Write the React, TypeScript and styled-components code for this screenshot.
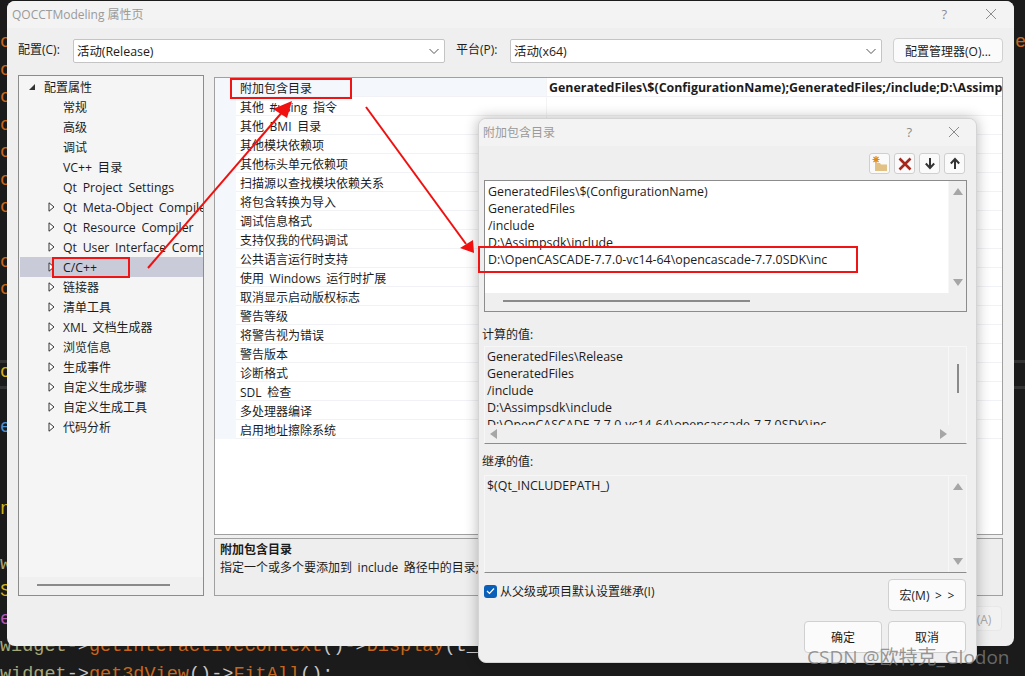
import styled, { createGlobalStyle } from 'styled-components'

const GlobalStyle = createGlobalStyle`
  html, body {
    margin: 0;
    padding: 0;
    background: #1b1b1b;
  }
  * {
    box-sizing: border-box;
  }
`

const uiFont = `'Open Sans', 'Noto Sans CJK SC', sans-serif`

const treeItems = [
  { label: '常规' },
  { label: '高级' },
  { label: '调试' },
  { label: 'VC++ 目录', latin: true },
  { label: 'Qt Project Settings', latin: true },
  { label: 'Qt Meta-Object Compiler', arrow: true, latin: true },
  { label: 'Qt Resource Compiler', arrow: true, latin: true },
  { label: 'Qt User Interface Compiler', arrow: true, latin: true },
  { label: 'C/C++', arrow: true, selected: true, latin: true },
  { label: '链接器', arrow: true },
  { label: '清单工具', arrow: true },
  { label: 'XML 文档生成器', arrow: true },
  { label: '浏览信息', arrow: true },
  { label: '生成事件', arrow: true },
  { label: '自定义生成步骤', arrow: true },
  { label: '自定义生成工具', arrow: true },
  { label: '代码分析', arrow: true },
]

const propertyNames = [
  '其他 #using 指令',
  '其他 BMI 目录',
  '其他模块依赖项',
  '其他标头单元依赖项',
  '扫描源以查找模块依赖关系',
  '将包含转换为导入',
  '调试信息格式',
  '支持仅我的代码调试',
  '公共语言运行时支持',
  '使用 Windows 运行时扩展',
  '取消显示启动版权标志',
  '警告等级',
  '将警告视为错误',
  '警告版本',
  '诊断格式',
  'SDL 检查',
  '多处理器编译',
  '启用地址擦除系统',
]

const editLines = [
  'GeneratedFiles\\$(ConfigurationName)',
  'GeneratedFiles',
  '/include',
  'D:\\Assimpsdk\\include',
  'D:\\OpenCASCADE-7.7.0-vc14-64\\opencascade-7.7.0SDK\\inc',
]

const computedLines = [
  'GeneratedFiles\\Release',
  'GeneratedFiles',
  '/include',
  'D:\\Assimpsdk\\include',
  'D:\\OpenCASCADE-7.7.0-vc14-64\\opencascade-7.7.0SDK\\inc',
]

const marginGlyphs: Record<number, [string, string]> = {
  1: ['c', '#c8671c'],
  2: ['c', '#c8671c'],
  3: ['c', '#c8671c'],
  4: ['c', '#c8671c'],
  5: ['c', '#c8671c'],
  6: ['c', '#c8671c'],
  7: ['c', '#c8671c'],
  9: ['c', '#c8671c'],
  10: ['c', '#c8671c'],
  13: ['o', '#d6b11f'],
  15: ['e', '#4f8fd0'],
  18: ['n', '#d6b11f'],
  20: ['w', '#a8a878'],
  21: ['S', '#d6b11f'],
  22: ['e', '#b455b4'],
}

function Chevron() {
  return (
    <svg width="12" height="12" viewBox="0 0 12 12">
      <path d="M1.5 4 L6 8.5 L10.5 4" fill="none" stroke="#555" strokeWidth="1" />
    </svg>
  )
}

function CloseGlyph() {
  return (
    <svg width="12" height="12" viewBox="0 0 12 12">
      <path d="M1 1 L11 11 M11 1 L1 11" stroke="#8c8c8c" strokeWidth="1" />
    </svg>
  )
}

function TreeArrow({ open }: { open?: boolean }) {
  return open ? (
    <svg width="8" height="8" viewBox="0 0 8 8">
      <path d="M7 1 V7 H1 Z" fill="#333" />
    </svg>
  ) : (
    <svg width="7" height="10" viewBox="0 0 7 10">
      <path d="M1 .8 L6 5 L1 9.2 Z" fill="#fff" stroke="#333" strokeWidth="1" />
    </svg>
  )
}

function NewFolderIcon() {
  return (
    <svg width="18" height="17" viewBox="0 0 18 17">
      <path d="M4 8 H9 L10 9.5 H16 V16 H4 Z" fill="#e2c184" />
      <path d="M5 1 V8 M1.5 4.5 H8.5 M2.5 2 L7.5 7 M7.5 2 L2.5 7" stroke="#e08a1a" strokeWidth="1.2" />
    </svg>
  )
}

function DeleteIcon() {
  return (
    <svg width="14" height="14" viewBox="0 0 14 14">
      <path d="M1.5 1.5 L12.5 12.5 M12.5 1.5 L1.5 12.5" stroke="#a5281c" strokeWidth="2.6" />
    </svg>
  )
}

function ArrowIcon({ up }: { up?: boolean }) {
  return (
    <svg width="12" height="13" viewBox="0 0 12 13">
      <path
        d={up ? 'M6 12 V2.5 M1.8 6.5 L6 2 L10.2 6.5' : 'M6 1 V10.5 M1.8 6.5 L6 11 L10.2 6.5'}
        fill="none"
        stroke="#333"
        strokeWidth="2"
      />
    </svg>
  )
}

export default function App() {
  return (
    <Page>
      <GlobalStyle />

      <CodeLayer>
        {Array.from({ length: 23 }, (_, i) => (
          <CodeLine key={i} $color={marginGlyphs[i]?.[1]}>
            {marginGlyphs[i]?.[0] ?? ' '}
          </CodeLine>
        ))}
        <CodeLine>
          <Olive>widget</Olive>
          <Plain>-&gt;</Plain>
          <Method>getInteractiveContext</Method>
          <Plain>()-&gt;</Plain>
          <Method>Display</Method>
          <Plain>(t_</Plain>
        </CodeLine>
        <CodeLine>
          <Olive>widget</Olive>
          <Plain>-&gt;</Plain>
          <Method>get3dView</Method>
          <Plain>()-&gt;</Plain>
          <Method>FitAll</Method>
          <Plain>();</Plain>
        </CodeLine>
        <RightGlyph>e</RightGlyph>
        <EditorRule $top={358} />
        <EditorRule $top={384} />
      </CodeLayer>

      <Window>
        <TitleBar>
          <TitleText>QOCCTModeling 属性页</TitleText>
          <TitleButtons $gap={38}>
            <HelpMark>?</HelpMark>
            <CloseGlyph />
          </TitleButtons>
        </TitleBar>

        <ConfigRow>
          <ConfigLabel $width={55}>配置(C):</ConfigLabel>
          <Select>
            <SelectText>活动(Release)</SelectText>
            <Chevron />
          </Select>
          <ConfigLabel $width={54} $gap={11}>平台(P):</ConfigLabel>
          <Select>
            <SelectText>活动(x64)</SelectText>
            <Chevron />
          </Select>
          <ManagerButton>配置管理器(O)...</ManagerButton>
        </ConfigRow>

        <Panels>
          <Tree>
            <TreeRows>
              <TreeRow $level={1}>
                <ArrowSlot><TreeArrow open /></ArrowSlot>
                配置属性
              </TreeRow>
              {treeItems.map(item => (
                <TreeRow key={item.label} $level={2} $selected={item.selected} $latin={item.latin}>
                  <ArrowSlot>{item.arrow && <TreeArrow />}</ArrowSlot>
                  {item.label}
                </TreeRow>
              ))}
            </TreeRows>
            <TreeScroll>
              <HThumb $left={18} $width={133} />
            </TreeScroll>
          </Tree>

          <RightColumn>
            <PropertyGrid>
              <PropertyRow>
                <Gutter />
                <NameCell $active>附加包含目录</NameCell>
                <ValueCell>
                  GeneratedFiles\$(ConfigurationName);GeneratedFiles;/include;D:\Assimpsdk\include;D:\OpenCASCADE
                </ValueCell>
              </PropertyRow>
              {propertyNames.map(name => (
                <PropertyRow key={name}>
                  <Gutter />
                  <NameCell>{name}</NameCell>
                  <ValueCell />
                </PropertyRow>
              ))}
            </PropertyGrid>
            <Description>
              <DescriptionTitle>附加包含目录</DescriptionTitle>
              <DescriptionText>指定一个或多个要添加到 include 路径中的目录;如果有多个目录,请用分号分隔。(/I[路径])</DescriptionText>
            </Description>
          </RightColumn>
        </Panels>

        <Footer>
          <ApplyButton>应用(A)</ApplyButton>
        </Footer>
      </Window>

      <Dialog>
        <TitleBar>
          <TitleText $dialog>附加包含目录</TitleText>
          <TitleButtons $gap={36} $dialog>
            <HelpMark>?</HelpMark>
            <CloseGlyph />
          </TitleButtons>
        </TitleBar>

        <Toolbar>
          <ToolButton><NewFolderIcon /></ToolButton>
          <ToolButton><DeleteIcon /></ToolButton>
          <ToolButton><ArrowIcon /></ToolButton>
          <ToolButton><ArrowIcon up /></ToolButton>
        </Toolbar>

        <ListBox $height={132} $dark>
          <ListMain>
            <ListText $white>
              {editLines.map(line => <ListLine key={line}>{line}</ListLine>)}
            </ListText>
            <VScroll>
              <ScrollArrow $dir="up" />
              <ScrollArrow $dir="down" />
            </VScroll>
          </ListMain>
          <HScrollBar>
            <HThumb $left={18} $width={247} />
          </HScrollBar>
        </ListBox>

        <SectionLabel $top={14} $bottom={3}>计算的值:</SectionLabel>
        <ListBox $height={98}>
          <ListMain>
            <ListText>
              {computedLines.map(line => <ListLine key={line}>{line}</ListLine>)}
            </ListText>
            <VScroll>
              <VThumb />
            </VScroll>
          </ListMain>
          <HScrollBar $arrows>
            <ScrollArrow $dir="left" />
            <ScrollArrow $dir="right" />
          </HScrollBar>
        </ListBox>

        <SectionLabel $top={9} $bottom={5}>继承的值:</SectionLabel>
        <ListBox $height={98}>
          <ListMain>
            <ListText>
              <ListLine>$(Qt_INCLUDEPATH_)</ListLine>
            </ListText>
            <VScroll>
              <ScrollArrow $dir="up" />
              <ScrollArrow $dir="down" />
            </VScroll>
          </ListMain>
        </ListBox>

        <InheritRow>
          <InheritLabel>
            <CheckBox>
              <svg width="9" height="8" viewBox="0 0 9 8">
                <path d="M1 4 L3.5 6.5 L8 1.5" fill="none" stroke="#fff" strokeWidth="1.2" />
              </svg>
            </CheckBox>
            从父级或项目默认设置继承(I)
          </InheritLabel>
          <DialogButton>宏(M) &gt; &gt;</DialogButton>
        </InheritRow>

        <ButtonRow>
          <DialogButton>确定</DialogButton>
          <DialogButton>取消</DialogButton>
        </ButtonRow>
      </Dialog>

      <RedBox $x={230} $y={78} $w={122} $h={21} />
      <RedBox $x={52} $y={257} $w={78} $h={21} />
      <RedBox $x={478} $y={246} $w={380} $h={27} />

      <Annotations width="1025" height="676" viewBox="0 0 1025 676">
        <path d="M148 268 L284 110" stroke="#f01010" strokeWidth="2" />
        <path d="M292 101 L273 109 L287 118 Z" fill="#f01010" />
        <path d="M366 107 L466 244" stroke="#f01010" strokeWidth="2" />
        <path d="M474 253 L473 240 L460 248 Z" fill="#f01010" />
      </Annotations>

      <Watermark>CSDN @欧特克_Glodon</Watermark>
    </Page>
  )
}

// #region CSS

const Page = styled.div`
  position: relative;
  width: 1025px;
  height: 676px;
  overflow: hidden;
  background: #1b1b1b;
  font-family: ${uiFont};
  font-size: 12px;
  word-spacing: 2.5px;
  color: #1c1c1c;
`

const CodeLayer = styled.div`
  position: absolute;
  inset: 2px 0 0 0;
  font-family: 'Liberation Mono', monospace;
  font-size: 18.53px;
  word-spacing: 0;
`

const CodeLine = styled.div<{ $color?: string }>`
  height: 27.45px;
  line-height: 27.45px;
  white-space: pre;
  color: ${props => props.$color || '#ccc'};
`

const Olive = styled.span`
  color: #a8a878;
`

const Plain = styled.span`
  color: #c8c8c8;
`

const Method = styled.span`
  color: #c8671c;
`

const RightGlyph = styled.div`
  position: absolute;
  top: 27px;
  left: 1015px;
  line-height: 27.45px;
  color: #c8671c;
`

const EditorRule = styled.div<{ $top: number }>`
  position: absolute;
  top: ${props => props.$top}px;
  left: 0;
  right: 0;
  height: 3px;
  background: #333;
`

const Window = styled.div`
  position: absolute;
  left: 7px;
  top: 1px;
  width: 1007px;
  height: 645px;
  display: flex;
  flex-direction: column;
  background: #efefef;
  border-radius: 8px;
  overflow: hidden;
`

const TitleBar = styled.div`
  flex: none;
  height: 27px;
  padding-bottom: 2px;
  display: flex;
  align-items: center;
  justify-content: space-between;
  background: #f3f3f3;
`

const TitleText = styled.div<{ $dialog?: boolean }>`
  padding-left: ${props => (props.$dialog ? 4 : 5)}px;
  color: #9a9a9a;
  font-size: 12px;
  word-spacing: 0;
`

const TitleButtons = styled.div<{ $gap: number; $dialog?: boolean }>`
  display: flex;
  align-items: center;
  gap: ${props => props.$gap}px;
  padding-right: ${props => (props.$dialog ? 16 : 17)}px;
`

const HelpMark = styled.span`
  color: #8c8c8c;
  font-size: 13px;
`

const ConfigRow = styled.div`
  flex: none;
  height: 25px;
  margin: 11px 0 11px;
  padding: 0 12px 0 11px;
  display: flex;
  align-items: flex-start;
`

const ConfigLabel = styled.div<{ $width: number; $gap?: number }>`
  flex: none;
  width: ${props => props.$width}px;
  margin-left: ${props => props.$gap || 0}px;
  line-height: 22px;
`

const Select = styled.div`
  flex: none;
  width: 372px;
  height: 24px;
  padding: 0 4px 0 3px;
  display: flex;
  align-items: center;
  justify-content: space-between;
  background: #fff;
  border: 1px solid #c4c4c4;
  border-radius: 2px;
`

const SelectText = styled.span`
  font-size: 12.4px;
`

const ManagerButton = styled.div`
  flex: none;
  width: 110px;
  height: 25px;
  margin: -1px 0 0 11px;
  display: flex;
  align-items: center;
  justify-content: center;
  background: #fbfbfb;
  border: 1px solid #d0d0d0;
  border-radius: 4px;
`

const Panels = styled.div`
  flex: none;
  height: 521px;
  padding: 0 11px;
  display: flex;
  gap: 10px;
`

const Tree = styled.div`
  flex: none;
  width: 186px;
  display: flex;
  flex-direction: column;
  background: #f5f5f5;
  border: 1px solid #8c8c8c;
  overflow: hidden;
`

const TreeRows = styled.div`
  flex: 1;
  padding: 1px 0 0 1px;
`

const TreeRow = styled.div<{ $level: number; $selected?: boolean; $latin?: boolean }>`
  height: 20px;
  padding-left: ${props => (props.$level === 1 ? 6 : 25)}px;
  display: flex;
  align-items: center;
  white-space: nowrap;
  overflow: hidden;
  font-size: ${props => (props.$latin ? 12.3 : 12)}px;
  background: ${props => (props.$selected ? '#c9cbd9' : 'transparent')};
`

const ArrowSlot = styled.span`
  flex: none;
  width: 12px;
  margin-right: 6px;
  display: flex;
  align-items: center;
  justify-content: center;
`

const TreeScroll = styled.div`
  flex: none;
  height: 18px;
  position: relative;
  background: #f0f0f0;
`

const HThumb = styled.div<{ $left: number; $width: number }>`
  margin-left: ${props => props.$left}px;
  margin-top: 7px;
  width: ${props => props.$width}px;
  height: 2px;
  background: #8a8a8a;
`

const RightColumn = styled.div`
  flex: 1;
  min-width: 0;
  padding-top: 2px;
  display: flex;
  flex-direction: column;
  gap: 3px;
`

const PropertyGrid = styled.div`
  flex: none;
  height: 458px;
  background: #fff;
  border: 1px solid #a0a0a0;
  overflow: hidden;
`

const PropertyRow = styled.div`
  height: 19px;
  display: flex;
`

const Gutter = styled.div`
  flex: none;
  width: 21px;
  background: #f4f7fc;
`

const NameCell = styled.div<{ $active?: boolean }>`
  flex: none;
  width: 310px;
  padding: 2px 0 0 4px;
  line-height: 17px;
  white-space: nowrap;
  background: ${props => (props.$active ? '#f4f7fc' : '#fff')};
  border-bottom: 1px solid #f0f2f5;
`

const ValueCell = styled.div`
  flex: 1;
  min-width: 0;
  padding: 1px 0 0 2px;
  line-height: 18px;
  font-size: 12.4px;
  font-weight: 700;
  white-space: nowrap;
  overflow: hidden;
  border-left: 1px solid #f4f4f4;
  border-bottom: 1px solid #f0f2f5;
`

const Description = styled.div`
  flex: none;
  height: 58px;
  padding: 2px 5px;
  background: #eeeeee;
  border: 1px solid #a0a0a0;
  overflow: hidden;
`

const DescriptionTitle = styled.div`
  line-height: 18px;
  font-weight: 700;
`

const DescriptionText = styled.div`
  line-height: 18px;
  white-space: nowrap;
`

const Footer = styled.div`
  flex: none;
  padding: 10px 12px 0 0;
  display: flex;
  justify-content: flex-end;
`

const ApplyButton = styled.div`
  width: 60px;
  height: 25px;
  display: flex;
  align-items: center;
  justify-content: center;
  color: #a8a8a8;
  background: #f2f2f2;
  border: 1px solid #e8e8e8;
  border-radius: 4px;
`

const Dialog = styled.div`
  position: absolute;
  left: 478px;
  top: 118px;
  width: 499px;
  height: 545px;
  display: flex;
  flex-direction: column;
  padding-bottom: 10px;
  background: #efefef;
  border: 1px solid #d4d4d4;
  border-radius: 8px;
  overflow: hidden;
  box-shadow: 0 0 14px rgba(0, 0, 0, 0.28);
`

const Toolbar = styled.div`
  flex: none;
  height: 21px;
  margin: 7px 11px 6px 0;
  display: flex;
  justify-content: flex-end;
  gap: 4px;
`

const ToolButton = styled.div`
  width: 21px;
  height: 21px;
  display: flex;
  align-items: center;
  justify-content: center;
  background: #fafafa;
  border: 1px solid #cfcfcf;
  border-radius: 3px;
`

const ListBox = styled.div<{ $height: number; $dark?: boolean }>`
  flex: none;
  height: ${props => props.$height}px;
  margin: 0 9px 0 5px;
  display: flex;
  flex-direction: column;
  font-size: 12.4px;
  background: #efefef;
  border: 1px solid ${props => (props.$dark ? '#8c8c8c' : '#f7f7f7')};
  border-bottom-color: #8c8c8c;
  overflow: hidden;
`

const ListMain = styled.div`
  flex: 1;
  min-height: 0;
  display: flex;
`

const ListText = styled.div<{ $white?: boolean }>`
  flex: 1;
  min-width: 0;
  padding: ${props => (props.$white ? '2px 0 0 3px' : '1px 0 0 2px')};
  background: ${props => (props.$white ? '#fff' : '#efefef')};
  border-right: 1px solid #f7f7f7;
  overflow: hidden;
`

const ListLine = styled.div`
  height: 17px;
  line-height: 17px;
  white-space: nowrap;
`

const VScroll = styled.div`
  flex: none;
  width: 17px;
  padding: 7px 0;
  display: flex;
  flex-direction: column;
  align-items: center;
  justify-content: space-between;
`

const VThumb = styled.div`
  width: 2px;
  height: 29px;
  margin-top: 10px;
  background: #8a8a8a;
`

const HScrollBar = styled.div<{ $arrows?: boolean }>`
  flex: none;
  height: 18px;
  padding: ${props => (props.$arrows ? '0 19px 0 5px' : '0')};
  display: ${props => (props.$arrows ? 'flex' : 'block')};
  align-items: center;
  justify-content: space-between;
`

const arrowBorders = {
  up: 'border-width: 0 5px 7px; border-color: transparent transparent #a6a6a6;',
  down: 'border-width: 7px 5px 0; border-color: #a6a6a6 transparent transparent;',
  left: 'border-width: 5px 7px 5px 0; border-color: transparent #a6a6a6 transparent transparent;',
  right: 'border-width: 5px 0 5px 7px; border-color: transparent transparent transparent #a6a6a6;',
}

const ScrollArrow = styled.div<{ $dir: keyof typeof arrowBorders }>`
  width: 0;
  height: 0;
  border-style: solid;
  ${props => arrowBorders[props.$dir]}
`

const SectionLabel = styled.div<{ $top: number; $bottom: number }>`
  flex: none;
  height: 17px;
  line-height: 17px;
  margin: ${props => props.$top}px 0 ${props => props.$bottom}px 3px;
`

const InheritRow = styled.div`
  flex: none;
  height: 32px;
  margin: 6px 10px 10px 5px;
  display: flex;
  justify-content: space-between;
`

const InheritLabel = styled.div`
  height: 24px;
  display: flex;
  align-items: center;
  gap: 3px;
`

const CheckBox = styled.span`
  width: 13px;
  height: 13px;
  display: flex;
  align-items: center;
  justify-content: center;
  background: #0a5fb8;
  border-radius: 3px;
`

const DialogButton = styled.div`
  flex: none;
  width: 78px;
  height: 32px;
  display: flex;
  align-items: center;
  justify-content: center;
  background: #fbfbfb;
  border: 1px solid #d0d0d0;
  border-radius: 4px;
`

const ButtonRow = styled.div`
  flex: none;
  margin-right: 10px;
  display: flex;
  justify-content: flex-end;
  gap: 6px;
`

const RedBox = styled.div<{ $x: number; $y: number; $w: number; $h: number }>`
  position: absolute;
  left: ${props => props.$x}px;
  top: ${props => props.$y}px;
  width: ${props => props.$w}px;
  height: ${props => props.$h}px;
  border: 2px solid #f01414;
`

const Annotations = styled.svg`
  position: absolute;
  left: 0;
  top: 0;
  pointer-events: none;
`

const Watermark = styled.div`
  position: absolute;
  left: 807px;
  top: 646px;
  font-size: 19px;
  line-height: 22px;
  word-spacing: 0;
  white-space: nowrap;
  color: rgba(125, 125, 125, 0.8);
`

// #endregion
